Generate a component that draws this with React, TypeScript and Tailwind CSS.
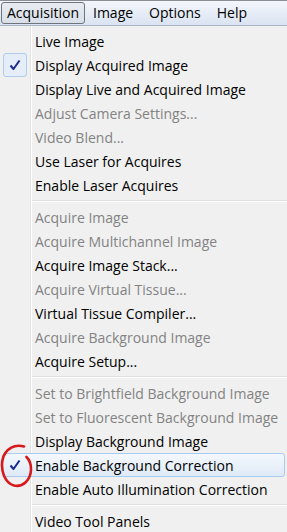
import { Fragment } from 'react';

type Item = { label: string; disabled?: boolean; checked?: boolean; hover?: boolean; circled?: boolean } | 'sep';

const ITEMS: Item[] = [
  { label: 'Live Image' },
  { label: 'Display Acquired Image', checked: true },
  { label: 'Display Live and Acquired Image' },
  { label: 'Adjust Camera Settings...', disabled: true },
  { label: 'Video Blend...', disabled: true },
  { label: 'Use Laser for Acquires' },
  { label: 'Enable Laser Acquires' },
  'sep',
  { label: 'Acquire Image', disabled: true },
  { label: 'Acquire Multichannel Image', disabled: true },
  { label: 'Acquire Image Stack...' },
  { label: 'Acquire Virtual Tissue...', disabled: true },
  { label: 'Virtual Tissue Compiler...' },
  { label: 'Acquire Background Image', disabled: true },
  { label: 'Acquire Setup...' },
  'sep',
  { label: 'Set to Brightfield Background Image', disabled: true },
  { label: 'Set to Fluorescent Background Image', disabled: true },
  { label: 'Display Background Image' },
  { label: 'Enable Background Correction', checked: true, hover: true, circled: true },
  { label: 'Enable Auto Illumination Correction' },
  'sep',
  { label: 'Video Tool Panels' },
];

function Check() {
  return (
    <svg width="12" height="12" viewBox="0 0 12 12">
      <path d="M1.5 6.5 L4.5 10 L10.5 1.5" fill="none" stroke="#1c2a8c" strokeWidth="2" strokeLinejoin="round" />
    </svg>
  );
}

// hand-drawn red ring round the second check
function Circle() {
  return (
    <svg className="absolute -left-[3px] -top-[11px] pointer-events-none" width="34" height="48" viewBox="0 0 34 48">
      <path
        d="M24 3.5 C15 1 5 5 2.5 17 C0.5 28 5 40 14 42.5 C23 44.5 30.5 37 31 27 C31.2 21 29.5 17 26.5 14"
        fill="none"
        stroke="#d8191c"
        strokeWidth="2.6"
        strokeLinecap="round"
      />
    </svg>
  );
}

export default function App() {
  return (
    <div className="w-[287px] h-[532px] overflow-hidden bg-[#f0f0f0] text-[14px] text-black" style={{ fontFamily: '"Open Sans", "Noto Sans", sans-serif' }}>
      {/* Menu bar */}
      <div className="h-[26px] border-t border-[#8a8f96] border-b border-b-[#a9b3c1] bg-gradient-to-b from-[#f3f6fb] via-[#e7edf7] to-[#dae3f1] flex items-center pl-[1px]">
        <div className="h-[22px] px-[5px] flex items-center rounded-[3px] border border-[#6f747c] bg-gradient-to-b from-[#e8ecf2] to-[#d9dfe8] leading-none">
          Acquisition
        </div>
        <div className="px-[8px] leading-none">Image</div>
        <div className="px-[8px] leading-none">Options</div>
        <div className="px-[8px] leading-none">Help</div>
      </div>

      {/* Dropdown */}
      <div className="relative pt-[3px]">
        <div className="absolute left-[30px] top-0 bottom-0 w-[2px] border-l border-[#e2e3e3] bg-white" />
        {ITEMS.map((it, i) =>
          it === 'sep' ? (
            <div key={i} className="relative h-[8px] flex flex-col justify-center pl-[32px]">
              <div className="h-[1px] bg-[#e0e0e0]" />
              <div className="h-[1px] bg-white" />
            </div>
          ) : (
            <Fragment key={i}>
              <div
                className={
                  'relative h-[24px] flex items-center ' +
                  (it.hover ? 'mx-[2px] rounded-[3px] border border-[#a8cbf0] bg-gradient-to-b from-[#f4f8fd] to-[#dfeaf7]' : '')
                }
              >
                <div className={'w-[33px] shrink-0 flex items-center justify-center ' + (it.hover ? '-ml-[3px]' : '')}>
                  {it.checked && !it.hover && (
                    <div className="w-[24px] h-[24px] ml-[-3px] rounded-[3px] border border-[#aecbf0] bg-[#e5edf8] flex items-center justify-center">
                      <Check />
                    </div>
                  )}
                  {it.checked && it.hover && (
                    <div className="ml-[-3px] flex items-center justify-center">
                      <Check />
                    </div>
                  )}
                </div>
                <span className={'pl-[2px] whitespace-nowrap ' + (it.disabled ? 'text-[#838383]' : 'text-black')}>{it.label}</span>
                {it.circled && <Circle />}
              </div>
            </Fragment>
          )
        )}
      </div>
    </div>
  );
}
